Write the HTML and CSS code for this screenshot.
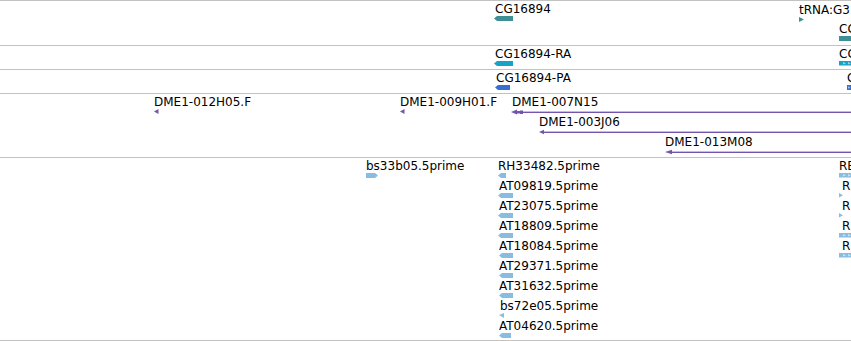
FILE: index.html
```html
<!DOCTYPE html>
<html>
<head>
<meta charset="utf-8">
<link rel="stylesheet" href="styles.css">
</head>
<body>
<div class="browser">
  <!-- Gene track -->
  <section class="track t-gene">
    <div class="feat" style="left:494px;top:1px">
      <span class="lbl sh1">CG16894</span>
      <svg class="glyph" width="19" height="6" viewBox="0 0 19 6"><polygon class="c-teal" points="3,0 19,0 19,5 3,5 0,2.5"/></svg>
    </div>
    <div class="feat" style="left:799px;top:2px">
      <span class="lbl">tRNA:G3:ZH</span>
      <svg class="glyph" width="6" height="6" viewBox="0 0 6 6"><polygon class="c-teal" points="0,0 5,2.5 0,5"/></svg>
    </div>
    <div class="feat" style="left:839px;top:21px">
      <span class="lbl">CG</span>
      <svg class="glyph" width="12" height="6" viewBox="0 0 12 6"><rect class="c-teal" x="0" y="0" width="12" height="5"/></svg>
    </div>
  </section>

  <!-- Transcript track -->
  <section class="track t-row">
    <div class="feat" style="left:494px;top:1px">
      <span class="lbl sh1">CG16894-RA</span>
      <svg class="glyph" width="19" height="6" viewBox="0 0 19 6"><polygon class="c-cyan" points="3,0 19,0 19,5 3,5 0,2.5"/></svg>
    </div>
    <div class="feat" style="left:839px;top:1px">
      <span class="lbl">CG</span>
      <svg class="glyph" width="12" height="6" viewBox="0 0 12 6"><rect class="c-cyan" x="0" y="0" width="12" height="4.5"/><polygon class="chev" points="4,1 7,2.25 4,3.5"/><polygon class="chev" points="9,1 12,2.25 9,3.5"/></svg>
    </div>
  </section>

  <!-- Protein track -->
  <section class="track t-row">
    <div class="feat" style="left:495px;top:1px">
      <span class="lbl sh1">CG16894-PA</span>
      <svg class="glyph" width="15" height="6" viewBox="0 0 15 6"><polygon class="c-blue" points="3,0 15,0 15,5 3,5 0,2.5"/></svg>
    </div>
    <div class="feat" style="left:847px;top:1px">
      <span class="lbl">CG</span>
      <svg class="glyph" width="4" height="6" viewBox="0 0 4 6"><rect class="c-blue" x="0" y="0" width="4" height="5"/><polygon class="chev" points="1,1.2 3.5,2.5 1,3.8"/></svg>
    </div>
  </section>

  <!-- BAC clone track -->
  <section class="track t-bac">
    <div class="feat" style="left:154px;top:1px">
      <span class="lbl">DME1-012H05.F</span>
      <svg class="glyph" width="5" height="6" viewBox="0 0 5 6"><polygon class="c-purple" points="0,2.5 4.5,0 4.5,5"/></svg>
    </div>
    <div class="feat" style="left:400px;top:1px">
      <span class="lbl">DME1-009H01.F</span>
      <svg class="glyph" width="5" height="6" viewBox="0 0 5 6"><polygon class="c-purple" points="0,2.5 4.5,0 4.5,5"/></svg>
    </div>
    <div class="feat" style="left:511px;top:1px">
      <span class="lbl sh-1">DME1-007N15</span>
      <svg class="glyph" width="340" height="6" viewBox="0 0 340 6"><polygon class="c-purple" points="0,3 6,0.5 6,2 11,2 11,4.5 6,4.5 6,5.5"/><rect class="c-purple" x="9" y="1.5" width="3" height="3.5"/><rect class="c-purple" x="11" y="2.6" width="329" height="1.4"/></svg>
    </div>
    <div class="feat" style="left:539px;top:21px">
      <span class="lbl">DME1-003J06</span>
      <svg class="glyph" width="312" height="6" viewBox="0 0 312 6"><polygon class="c-purple" points="0,3 5,0.8 5,5.2"/><rect class="c-purple" x="4" y="2.6" width="308" height="1.4"/></svg>
    </div>
    <div class="feat" style="left:665px;top:41px">
      <span class="lbl">DME1-013M08</span>
      <svg class="glyph" width="186" height="6" viewBox="0 0 186 6"><polygon class="c-purple" points="0,3 7,0.8 7,5.2"/><rect class="c-purple" x="6" y="2.6" width="180" height="1.4"/></svg>
    </div>
  </section>

  <!-- EST track -->
  <section class="track t-est">
    <div class="feat" style="left:366px;top:1px">
      <span class="lbl">bs33b05.5prime</span>
      <svg class="glyph" width="12" height="6" viewBox="0 0 12 6"><polygon class="c-light" points="0,0 9,0 12,2.5 9,5 0,5"/></svg>
    </div>
    <div class="feat" style="left:498px;top:1px">
      <span class="lbl">RH33482.5prime</span>
      <svg class="glyph" width="8" height="6" viewBox="0 0 8 6"><polygon class="c-light" points="3,0 8,0 8,5 3,5 0,2.5"/></svg>
    </div>
    <div class="feat" style="left:498px;top:21px">
      <span class="lbl sh1">AT09819.5prime</span>
      <svg class="glyph" width="15" height="6" viewBox="0 0 15 6"><polygon class="c-light" points="3,0 15,0 15,5 3,5 0,2.5"/></svg>
    </div>
    <div class="feat" style="left:498px;top:41px">
      <span class="lbl sh1">AT23075.5prime</span>
      <svg class="glyph" width="15" height="6" viewBox="0 0 15 6"><polygon class="c-light" points="3,0 15,0 15,5 3,5 0,2.5"/></svg>
    </div>
    <div class="feat" style="left:498px;top:61px">
      <span class="lbl sh1">AT18809.5prime</span>
      <svg class="glyph" width="15" height="6" viewBox="0 0 15 6"><polygon class="c-light" points="3,0 15,0 15,5 3,5 0,2.5"/></svg>
    </div>
    <div class="feat" style="left:499px;top:81px">
      <span class="lbl">AT18084.5prime</span>
      <svg class="glyph" width="14" height="6" viewBox="0 0 14 6"><polygon class="c-light" points="3,0 14,0 14,5 3,5 0,2.5"/></svg>
    </div>
    <div class="feat" style="left:499px;top:101px">
      <span class="lbl">AT29371.5prime</span>
      <svg class="glyph" width="14" height="6" viewBox="0 0 14 6"><polygon class="c-light" points="3,0 14,0 14,5 3,5 0,2.5"/></svg>
    </div>
    <div class="feat" style="left:499px;top:121px">
      <span class="lbl">AT31632.5prime</span>
      <svg class="glyph" width="14" height="6" viewBox="0 0 14 6"><polygon class="c-light" points="3,0 14,0 14,5 3,5 0,2.5"/></svg>
    </div>
    <div class="feat" style="left:499px;top:141px">
      <span class="lbl sh1">bs72e05.5prime</span>
      <svg class="glyph" width="5" height="6" viewBox="0 0 5 6"><polygon class="c-light" points="0,2 5,0 5,5"/></svg>
    </div>
    <div class="feat" style="left:499px;top:161px">
      <span class="lbl">AT04620.5prime</span>
      <svg class="glyph" width="12" height="6" viewBox="0 0 12 6"><polygon class="c-light" points="3,0 12,0 12,5 3,5 0,2.5"/></svg>
    </div>

    <div class="feat" style="left:839px;top:1px">
      <span class="lbl">RE</span>
      <svg class="glyph" width="12" height="6" viewBox="0 0 12 6"><rect class="c-light" x="0" y="0" width="12" height="4.5"/><polygon class="chev" points="4,1 7,2.25 4,3.5"/><polygon class="chev" points="9,1 12,2.25 9,3.5"/></svg>
    </div>
    <div class="feat" style="left:839px;top:21px">
      <span class="lbl sh3">RH</span>
      <svg class="glyph" width="5" height="6" viewBox="0 0 5 6"><polygon class="c-light" points="0,0 4,2.2 0,4.5"/></svg>
    </div>
    <div class="feat" style="left:839px;top:41px">
      <span class="lbl sh3">RH</span>
      <svg class="glyph" width="5" height="6" viewBox="0 0 5 6"><polygon class="c-light" points="0,0 4,2.2 0,4.5"/></svg>
    </div>
    <div class="feat" style="left:839px;top:61px">
      <span class="lbl sh3">RH</span>
      <svg class="glyph" width="12" height="6" viewBox="0 0 12 6"><rect class="c-light" x="0" y="0" width="12" height="4.5"/><polygon class="chev" points="4,1 7,2.25 4,3.5"/><polygon class="chev" points="9,1 12,2.25 9,3.5"/></svg>
    </div>
    <div class="feat" style="left:839px;top:81px">
      <span class="lbl sh3">RH</span>
      <svg class="glyph" width="12" height="6" viewBox="0 0 12 6"><rect class="c-light" x="0" y="0" width="12" height="4.5"/><polygon class="chev" points="4,1 7,2.25 4,3.5"/><polygon class="chev" points="9,1 12,2.25 9,3.5"/></svg>
    </div>
  </section>
</div>
</body>
</html>
```

FILE: styles.css
```css
html, body {
  margin: 0;
  padding: 0;
  background: #ffffff;
}

body {
  width: 851px;
  height: 341px;
  overflow: hidden;
  font-family: "DejaVu Sans", "Liberation Sans", sans-serif;
  font-size: 12px;
  color: #000000;
}

.browser {
  display: flex;
  flex-direction: column;
  width: 851px;
}

.track {
  position: relative;
  border-top: 1px solid #c2c2c2;
  overflow: hidden;
}

.t-gene { height: 44px; }
.t-row { height: 23px; }
.t-bac { height: 63px; }
.t-est {
  height: 182px;
  border-bottom: 1px solid #c2c2c2;
}

.feat {
  position: absolute;
  display: flex;
  flex-direction: column;
  align-items: flex-start;
}

.lbl {
  display: block;
  line-height: 14px;
  height: 14px;
  white-space: nowrap;
}

.sh1 { margin-left: 1px; }
.sh3 { margin-left: 3px; }
.sh-1 { margin-left: 1px; }

.glyph {
  display: block;
  overflow: visible;
}

.c-teal { fill: #3f8f96; }
.c-cyan { fill: #17a3c5; }
.c-blue { fill: #3570d2; }
.c-purple { fill: #7455ad; }
.c-light { fill: #88bde1; }

.chev {
  fill: #ffffff;
  opacity: 0.55;
}
```
